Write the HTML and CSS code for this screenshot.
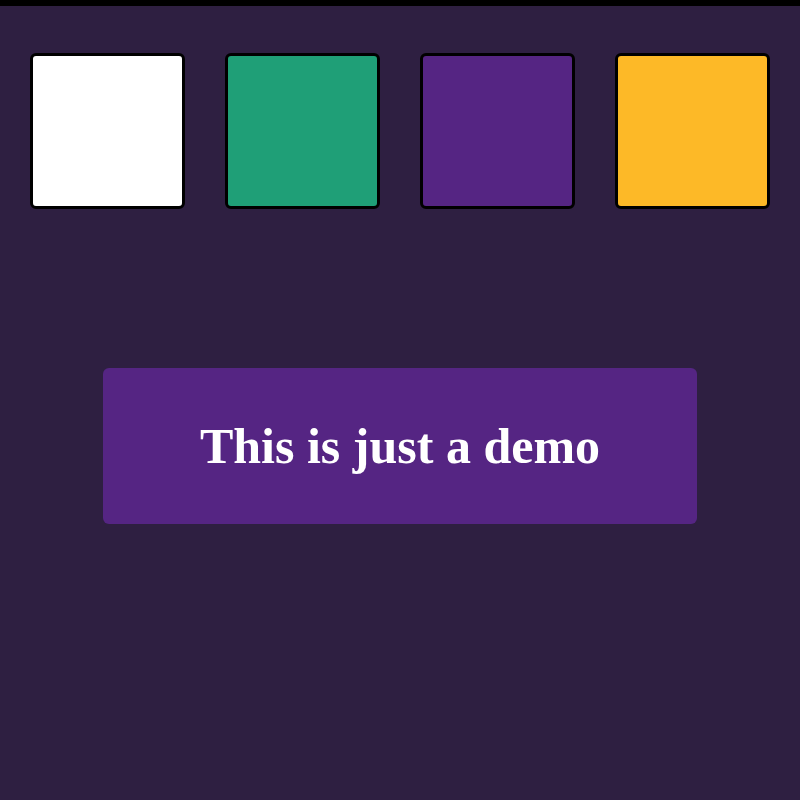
FILE: index.html
```html
<!DOCTYPE html>
<html>
<head>
<meta charset="utf-8">
<link rel="stylesheet" href="styles.css">
</head>
<body>
<div class="topbar"></div>
<div class="swatches">
  <div class="swatch white"></div>
  <div class="swatch green"></div>
  <div class="swatch purple"></div>
  <div class="swatch gold"></div>
</div>
<div class="banner">This is just a demo</div>
</body>
</html>
```
FILE: styles.css
```css
html, body {
  margin: 0;
  padding: 0;
  background: #2e1f41;
  height: 800px;
  overflow: hidden;
}
.topbar {
  height: 6px;
  background: #000;
}
.swatches {
  display: flex;
  justify-content: space-between;
  padding: 47px 30px 0 30px;
}
.swatch {
  width: 149px;
  height: 150px;
  border: 3px solid #000;
  border-radius: 6px;
}
.white { background: #ffffff; }
.green { background: #1f9f77; }
.purple { background: #552583; }
.gold { background: #fdb927; }
.banner {
  margin: 159px auto 0 auto;
  width: 594px;
  height: 156px;
  background: #552583;
  border-radius: 6px;
  display: flex;
  align-items: center;
  justify-content: center;
  color: #fff;
  font-family: "Liberation Serif", serif;
  font-weight: bold;
  font-size: 50px;
}
```
